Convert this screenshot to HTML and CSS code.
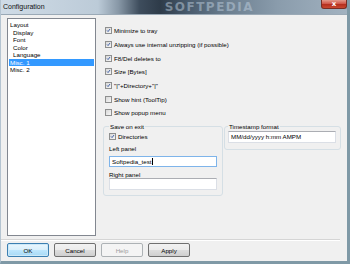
FILE: index.html
```html
<!DOCTYPE html>
<html lang="en">
<head>
    <meta charset="UTF-8">
    <meta name="viewport" content="width=device-width, initial-scale=1.0">
    <title>Configuration</title>
    <link rel="stylesheet" href="styles.css">
</head>
<body>
    <div class="window">
        <div class="titlebar">
            <span class="title">Configuration</span>
            <span class="watermark">SOFTPEDIA</span>
            <span class="close">x</span>
        </div>
        <div class="client">
            <div class="main">
                <ul class="tree">
                    <li>Layout</li>
                    <li class="sub">Display</li>
                    <li class="sub">Font</li>
                    <li class="sub">Color</li>
                    <li class="sub">Language</li>
                    <li class="selected">Misc. 1</li>
                    <li>Misc. 2</li>
                </ul>
                <div class="options">
                    <div class="checks">
                        <div class="check"><span class="box on"><svg viewBox="0 0 7 7"><path d="M1.4 3.4 L2.9 5 L5.6 1.4"/></svg></span>Minimize to tray</div>
                        <div class="check"><span class="box on"><svg viewBox="0 0 7 7"><path d="M1.4 3.4 L2.9 5 L5.6 1.4"/></svg></span>Always use internal unzipping (if possible)</div>
                        <div class="check"><span class="box on"><svg viewBox="0 0 7 7"><path d="M1.4 3.4 L2.9 5 L5.6 1.4"/></svg></span>F8/Del deletes to</div>
                        <div class="check"><span class="box on"><svg viewBox="0 0 7 7"><path d="M1.4 3.4 L2.9 5 L5.6 1.4"/></svg></span>Size [Bytes]</div>
                        <div class="check"><span class="box on"><svg viewBox="0 0 7 7"><path d="M1.4 3.4 L2.9 5 L5.6 1.4"/></svg></span>"|"+Directory+"|"</div>
                        <div class="check"><span class="box"></span>Show hint (ToolTip)</div>
                        <div class="check"><span class="box"></span>Show popup menu</div>
                    </div>
                    <div class="groups">
                        <fieldset class="group save">
                            <legend>Save on exit</legend>
                            <div class="check inner"><span class="box on"><svg viewBox="0 0 7 7"><path d="M1.4 3.4 L2.9 5 L5.6 1.4"/></svg></span>Directories</div>
                            <div class="field-label">Left panel</div>
                            <div class="textbox focused">Softpedia_test<span class="caret"></span></div>
                            <div class="field-label">Right panel</div>
                            <div class="textbox"></div>
                        </fieldset>
                        <fieldset class="group stamp">
                            <legend>Timestamp format</legend>
                            <div class="textbox">MM/dd/yyyy h:mm AMPM</div>
                        </fieldset>
                    </div>
                </div>
            </div>
            <div class="separator"></div>
            <div class="buttons">
                <button class="btn default">OK</button>
                <button class="btn">Cancel</button>
                <button class="btn disabled">Help</button>
                <button class="btn">Apply</button>
            </div>
        </div>
    </div>
</body>
</html>
```

FILE: styles.css
```css
body {
    margin: 0;
    background: #f0f0f0;
    font-family: 'Liberation Sans', Arial, sans-serif;
    font-size: 6.2px;
    color: #000;
}
.window {
    width: 350px;
    height: 264px;
    box-sizing: border-box;
    border-left: 1px solid #b4c4d1;
    border-right: 3px solid #7f99a6;
    border-bottom: 3px solid #7f99a6;
    background: #f0f0f0;
    display: flex;
    flex-direction: column;
    overflow: hidden;
}
.titlebar {
    height: 14px;
    flex-shrink: 0;
    display: flex;
    align-items: flex-start;
    border-bottom: 1px solid #9aa9b6;
    background: linear-gradient(90deg, #cfdbe6 0%, #bccbd8 28%, #8797a6 34%, #3e4d5d 40%, #2e3b49 46%, #485a6c 54%, #6d8091 66%, #8a9cac 80%, #a2b2c0 100%);
}
.title {
    font-size: 7px;
    line-height: 13px;
    padding-left: 2px;
    color: #111;
}
.watermark {
    margin-left: 120px;
    font-family: 'DejaVu Sans', sans-serif;
    font-weight: bold;
    font-size: 12px;
    line-height: 14px;
    letter-spacing: 1.5px;
    color: rgba(190, 206, 222, 0.5);
}
.close {
    margin-left: auto;
    width: 26px;
    height: 9px;
    box-sizing: border-box;
    border: 1px solid #7a2e25;
    border-top: none;
    border-radius: 0 0 3px 3px;
    background: linear-gradient(180deg, #e39a8b 0%, #d1584a 45%, #b5301f 55%, #c9472f 100%);
    color: #fff;
    font-family: 'DejaVu Sans', sans-serif;
    font-weight: bold;
    font-size: 7px;
    line-height: 8px;
    text-align: center;
}
.client {
    flex: 1;
    padding: 3px 0 0 6px;
    display: flex;
    flex-direction: column;
}
.main {
    display: flex;
    height: 218px;
    flex-shrink: 0;
}
.tree {
    width: 89px;
    box-sizing: border-box;
    margin: 0;
    padding: 2px 1px;
    list-style: none;
    background: #fff;
    border: 1px solid #828790;
}
.tree li {
    height: 7.5px;
    line-height: 7.5px;
    padding-left: 1px;
}
.tree li.sub {
    padding-left: 4px;
}
.tree li.selected {
    background: #3399ff;
    color: #fff;
}
.options {
    margin-left: 8px;
    padding-top: 6px;
    flex: 1;
}
.checks {
    display: grid;
    grid-auto-rows: 13.7px;
}
.check {
    display: flex;
    align-items: center;
    gap: 2px;
    white-space: nowrap;
}
.box {
    width: 7px;
    height: 7px;
    margin-left: 1px;
    box-sizing: border-box;
    border: 1px solid #8e8f8f;
    background: linear-gradient(135deg, #d8d8d8, #f6f6f6);
    display: flex;
    flex-shrink: 0;
}
.box svg {
    width: 5px;
    height: 5px;
    fill: none;
    stroke: #2b4f9e;
    stroke-width: 1.2;
}
.groups {
    display: flex;
    gap: 1px;
    margin-top: 3.3px;
    margin-left: -1px;
    align-items: flex-start;
}
.group {
    margin: 0;
    box-sizing: border-box;
    border: 1px solid #d5dfe5;
    border-radius: 3px;
    padding: 0 4px 5px 5px;
    display: flex;
    flex-direction: column;
}
.group legend {
    padding: 0 1px;
    line-height: 7px;
}
.save {
    width: 120px;
}
.stamp {
    width: 117px;
    padding: 0 3px 6px 3px;
}
.check.inner {
    height: 10px;
    margin-top: 1.5px;
}
.check.inner .box {
    margin-left: 0;
}
.field-label {
    line-height: 7px;
    margin-top: 3.5px;
}
.textbox {
    width: 108px;
    height: 11.5px;
    box-sizing: border-box;
    margin-top: 0.5px;
    padding-left: 2px;
    line-height: 10px;
    background: #fff;
    border: 1px solid #dbdfe6;
    border-top-color: #abadb3;
    white-space: nowrap;
}
.save .textbox.focused {
    margin-top: 3.5px;
    border-color: #7eb4ea;
}
.save .textbox {
    margin-top: 0.5px;
}
.stamp .textbox {
    height: 12px;
    margin-top: 0.5px;
}
.caret {
    display: inline-block;
    width: 1px;
    height: 7px;
    background: #000;
    vertical-align: middle;
}
.separator {
    margin: 2.5px 0 0 -7px;
    width: 340px;
    height: 1px;
    background: #d5d5d5;
    border-bottom: 1px solid #fff;
}
.buttons {
    display: flex;
    gap: 5px;
    margin-top: 2.5px;
}
.btn {
    width: 42px;
    height: 14px;
    padding: 0;
    box-sizing: border-box;
    border: 1px solid #707070;
    border-radius: 2px;
    background: linear-gradient(180deg, #f2f2f2 0%, #ebebeb 50%, #dddddd 51%, #cfcfcf 100%);
    font-family: 'Liberation Sans', Arial, sans-serif;
    font-size: 6.2px;
    color: #000;
}
.btn.default {
    border-color: #3c7fb1;
    background: linear-gradient(180deg, #eaf6fd 0%, #d9f0fc 50%, #bee6fd 51%, #a7d9f5 100%);
    box-shadow: inset 0 0 0 1px #cde9f8;
}
.btn.disabled {
    border-color: #adb2b5;
    background: #f4f4f4;
    color: #9c9c9c;
}
```
